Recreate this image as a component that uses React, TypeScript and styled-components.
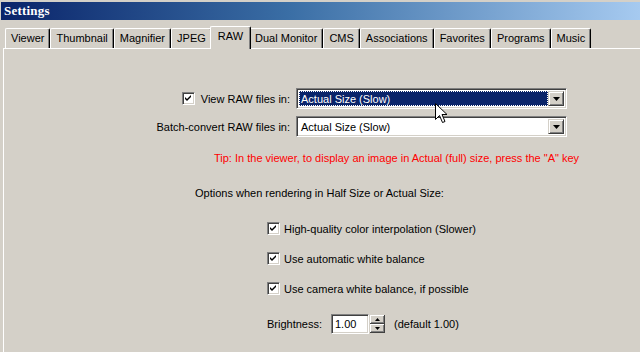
import React from "react";
import styled, { createGlobalStyle } from "styled-components";

const GlobalStyle = createGlobalStyle`
  html, body {
    margin: 0;
    padding: 0;
    background: #d4d0c8;
  }
  body {
    font-family: "Liberation Sans", Arial, sans-serif;
    font-size: 11px;
    color: #000;
  }
`;

const tabs = [
  "Viewer",
  "Thumbnail",
  "Magnifier",
  "JPEG",
  "RAW",
  "Dual Monitor",
  "CMS",
  "Associations",
  "Favorites",
  "Programs",
  "Music",
];

const options = [
  "High-quality color interpolation (Slower)",
  "Use automatic white balance",
  "Use camera white balance, if possible",
];

const CheckBox = () => (
  <Box>
    <svg width="9" height="9" viewBox="0 0 9 9">
      <path d="M1 3 L3 5 L7 1 L7 3 L3 7 L1 5 Z" fill="#000" />
    </svg>
  </Box>
);

const DownArrow = () => (
  <svg width="7" height="4" viewBox="0 0 7 4">
    <path d="M0 0 H7 L3.5 4 Z" fill="#000" />
  </svg>
);

const Combo: React.FC<{ value: string; selected?: boolean }> = ({ value, selected }) => (
  <ComboBox>
    <ComboValue selected={selected}>
      <span>{value}</span>
    </ComboValue>
    <ComboButton>
      <DownArrow />
    </ComboButton>
  </ComboBox>
);

const App: React.FC = () => (
  <Window>
    <GlobalStyle />
    <TitleBar>Settings</TitleBar>
    <TabStrip>
      {tabs.map((t) => (
        <Tab key={t} active={t === "RAW"}>
          {t}
        </Tab>
      ))}
    </TabStrip>
    <Panel>
      <FormGrid>
        <Label>
          <CheckBox />
          <span>View RAW files in:</span>
        </Label>
        <Combo value="Actual Size (Slow)" selected />
        <Label>
          <span>Batch-convert RAW files in:</span>
        </Label>
        <Combo value="Actual Size (Slow)" />
      </FormGrid>
      <Tip>Tip: In the viewer, to display an image in Actual (full) size, press the "A" key</Tip>
      <Heading>Options when rendering in Half Size or Actual Size:</Heading>
      <OptionList>
        {options.map((o) => (
          <OptionRow key={o}>
            <CheckBox />
            <span>{o}</span>
          </OptionRow>
        ))}
        <BrightnessRow>
          <span>Brightness:</span>
          <NumberBox>1.00</NumberBox>
          <Spinner>
            <SpinButton>
              <svg width="5" height="3" viewBox="0 0 5 3">
                <path d="M0 3 H5 L2.5 0 Z" fill="#000" />
              </svg>
            </SpinButton>
            <SpinButton>
              <svg width="5" height="3" viewBox="0 0 5 3">
                <path d="M0 0 H5 L2.5 3 Z" fill="#000" />
              </svg>
            </SpinButton>
          </Spinner>
          <span>(default 1.00)</span>
        </BrightnessRow>
      </OptionList>
      <Cursor width="13" height="21" viewBox="0 0 13 21">
        <path
          d="M0.5 0.5 L0.5 16.5 L4.5 12.5 L7.5 19.5 L10 18.5 L7 11.5 L12 11.5 Z"
          fill="#fff"
          stroke="#000"
          strokeWidth="1"
        />
      </Cursor>
    </Panel>
  </Window>
);

const Window = styled.div`
  width: 640px;
  height: 352px;
  overflow: hidden;
  border-top: 1px solid #d4d0c8;
  border-left: 1px solid #d4d0c8;
  box-sizing: border-box;
  display: flex;
  flex-direction: column;
`;

const TitleBar = styled.div`
  height: 18px;
  margin-top: 1px;
  padding-left: 3px;
  background: linear-gradient(to right, #0a246a 0%, #3a6ea5 45%, #a6caf0 100%);
  color: #fff;
  font-family: "Liberation Serif", "Times New Roman", serif;
  font-weight: bold;
  font-size: 13px;
  line-height: 18px;
  letter-spacing: 0.2px;
`;

const TabStrip = styled.div`
  display: flex;
  align-items: flex-end;
  height: 22px;
  margin-top: 6px;
  padding-left: 4px;
  position: relative;
  z-index: 1;
`;

const Tab = styled.div<{ active?: boolean }>`
  box-sizing: border-box;
  height: ${(p) => (p.active ? "23px" : "20px")};
  margin: ${(p) => (p.active ? "0 -2px -1px -2px" : "0 0 0 0")};
  padding: ${(p) => (p.active ? "2px 7px 0 7px" : "2px 5px 0 5px")};
  border-top: 1px solid #fff;
  border-left: 1px solid #fff;
  border-right: 1px solid #000;
  box-shadow: inset -1px 0 0 #808080;
  border-radius: 2px 2px 0 0;
  background: #d4d0c8;
  line-height: 15px;
  white-space: nowrap;
  position: relative;
  z-index: ${(p) => (p.active ? 2 : 1)};
`;

const Panel = styled.div`
  position: relative;
  flex: 1;
  margin-left: 2px;
  border-top: 1px solid #fff;
  border-left: 1px solid #fff;
  padding-top: 39px;
`;

const FormGrid = styled.div`
  display: grid;
  grid-template-columns: 286px 271px;
  grid-auto-rows: 21px;
  column-gap: 6px;
  row-gap: 7px;
`;

const Label = styled.label`
  display: flex;
  align-items: center;
  justify-content: flex-end;
  gap: 6px;
`;

const Box = styled.span`
  box-sizing: border-box;
  width: 13px;
  height: 13px;
  display: inline-flex;
  align-items: center;
  justify-content: center;
  background: #fff;
  border-top: 1px solid #808080;
  border-left: 1px solid #808080;
  border-right: 1px solid #fff;
  border-bottom: 1px solid #fff;
  box-shadow: inset 1px 1px 0 #404040, inset -1px -1px 0 #d4d0c8;
  flex-shrink: 0;
`;

const ComboBox = styled.div`
  box-sizing: border-box;
  display: flex;
  height: 21px;
  background: #fff;
  border-top: 1px solid #808080;
  border-left: 1px solid #808080;
  border-right: 1px solid #fff;
  border-bottom: 1px solid #fff;
  box-shadow: inset 1px 1px 0 #404040, inset -1px -1px 0 #d4d0c8;
  padding: 2px;
`;

const ComboValue = styled.div<{ selected?: boolean }>`
  flex: 1;
  display: flex;
  align-items: center;
  box-sizing: border-box;
  padding-left: 2px;
  background: ${(p) => (p.selected ? "#0a246a" : "#fff")};
  color: ${(p) => (p.selected ? "#fff" : "#000")};
  outline: ${(p) => (p.selected ? "1px dotted #fff" : "none")};
  outline-offset: -1px;
`;

const ComboButton = styled.div`
  box-sizing: border-box;
  width: 16px;
  display: flex;
  align-items: center;
  justify-content: center;
  background: #d4d0c8;
  border-top: 1px solid #d4d0c8;
  border-left: 1px solid #d4d0c8;
  border-right: 1px solid #404040;
  border-bottom: 1px solid #404040;
  box-shadow: inset 1px 1px 0 #fff, inset -1px -1px 0 #808080;
`;

const Tip = styled.div`
  margin-top: 15px;
  padding-left: 210px;
  color: #ff0000;
  line-height: 13px;
`;

const Heading = styled.div`
  margin-top: 22px;
  padding-left: 191px;
  line-height: 13px;
`;

const OptionList = styled.div`
  margin-top: 22px;
  padding-left: 263px;
  display: flex;
  flex-direction: column;
  gap: 17px;
`;

const OptionRow = styled.div`
  display: flex;
  align-items: center;
  gap: 4px;
  height: 13px;
`;

const BrightnessRow = styled.div`
  display: flex;
  align-items: center;
  height: 20px;
  margin-top: 2px;
  & > span:first-child {
    width: 64px;
  }
  & > span:last-child {
    margin-left: 9px;
  }
`;

const NumberBox = styled.div`
  box-sizing: border-box;
  width: 38px;
  height: 20px;
  background: #fff;
  border-top: 1px solid #808080;
  border-left: 1px solid #808080;
  border-right: 1px solid #fff;
  border-bottom: 1px solid #fff;
  box-shadow: inset 1px 1px 0 #404040, inset -1px -1px 0 #d4d0c8;
  padding: 2px 0 0 3px;
  line-height: 14px;
`;

const Spinner = styled.div`
  display: flex;
  flex-direction: column;
  width: 15px;
  height: 18px;
  margin-left: 1px;
`;

const SpinButton = styled.div`
  box-sizing: border-box;
  flex: 1;
  display: flex;
  align-items: center;
  justify-content: center;
  background: #d4d0c8;
  border-right: 1px solid #404040;
  border-bottom: 1px solid #404040;
  box-shadow: inset 1px 1px 0 #fff, inset -1px -1px 0 #808080;
`;

const Cursor = styled.svg`
  position: absolute;
  left: 431px;
  top: 54px;
  pointer-events: none;
`;

export default App;
